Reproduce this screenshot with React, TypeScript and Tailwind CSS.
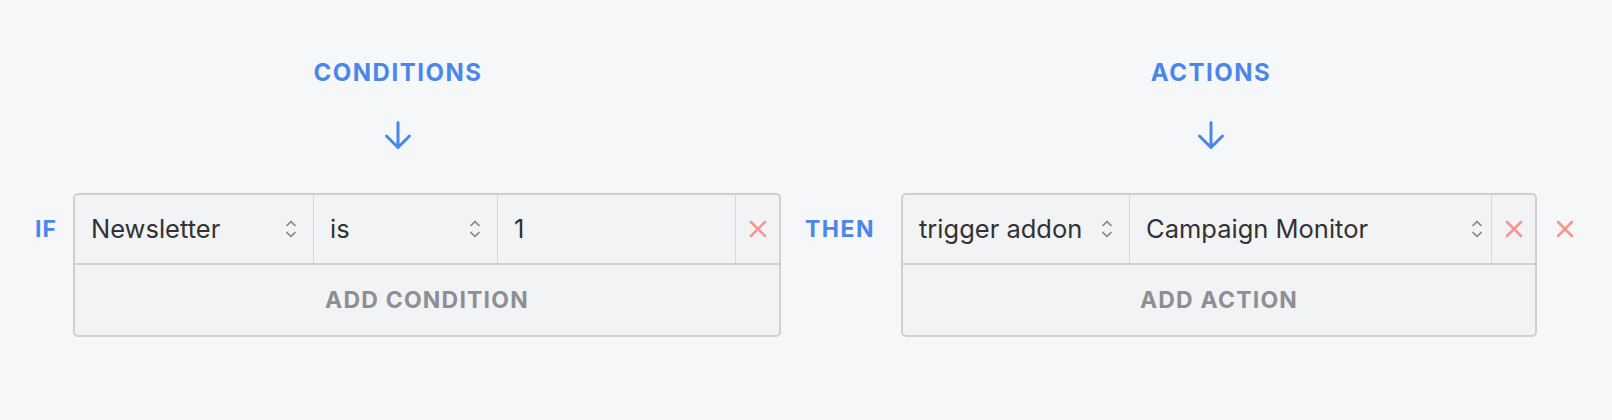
import React from 'react';

const blue = 'text-[#4b86ea]';

function ArrowDown() {
  return (
    <svg width="28" height="29" viewBox="0 0 28 29" fill="none" className="mx-auto">
      <path d="M14 1.5V26.5M2.5 15L14 26.5L25.5 15" stroke="#4b86ea" strokeWidth="3" strokeLinecap="round" strokeLinejoin="round" />
    </svg>
  );
}

function Chevrons() {
  return (
    <svg width="12" height="22" viewBox="0 0 12 22" fill="none" className="shrink-0">
      <path d="M2 7.5L6 3.5L10 7.5M2 14.5L6 18.5L10 14.5" stroke="#85858b" strokeWidth="1.7" strokeLinecap="round" strokeLinejoin="round" />
    </svg>
  );
}

function Cross() {
  return (
    <svg width="18" height="18" viewBox="0 0 18 18" fill="none" className="shrink-0">
      <path d="M2 2L16 16M16 2L2 16" stroke="#f4988e" strokeWidth="2.6" strokeLinecap="round" />
    </svg>
  );
}

function Select({ value, width, chevronPad = 'pr-4' }: { value: string; width: string; chevronPad?: string }) {
  return (
    <div className={`${width} flex items-center justify-between pl-[16px] ${chevronPad} border-r border-[#d3d8e0]`}>
      <span>{value}</span>
      <Chevrons />
    </div>
  );
}

function Header({ title, className }: { title: string; className: string }) {
  return (
    <div className={`${className} flex flex-col items-center`}>
      <div className={`text-[24px] font-bold tracking-[1.5px] leading-none ${blue}`}>{title}</div>
      <div className="mt-[36px]">
        <ArrowDown />
      </div>
    </div>
  );
}

export default function App() {
  return (
    <div className="w-[1612px] h-[420px] bg-[#f6f7f9] font-['Inter',sans-serif] text-[#323235]">
      <div className="flex pt-[61px]">
        <Header title="CONDITIONS" className="w-[796px]" />
        <Header title="ACTIONS" className="w-[780px] ml-[25px]" />
      </div>

      <div className="flex items-start pt-[43px] pl-[35px] text-[25.5px]">
        <div className={`w-[38px] h-[72px] flex items-center text-[23px] font-bold tracking-[1px] ${blue}`}>IF</div>
        <div className="w-[708px] rounded-[5px] border-2 border-[#cfd0d4] bg-[#f2f3f5]">
          <div className="flex h-[70px] border-b-2 border-[#cfd0d4]">
            <Select value="Newsletter" width="w-[239px]" />
            <Select value="is" width="w-[184px]" />
            <div className="w-[238px] flex items-center pl-[16px] border-r border-[#d3d8e0]">1</div>
            <div className="flex-1 flex items-center justify-center">
              <Cross />
            </div>
          </div>
          <div className="h-[70px] flex items-center justify-center text-[23px] font-bold tracking-[1.2px] text-[#8e8e93]">
            ADD CONDITION
          </div>
        </div>

        <div className={`ml-[24px] w-[96px] h-[72px] flex items-center text-[23px] font-bold tracking-[1.5px] ${blue}`}>THEN</div>
        <div className="w-[636px] rounded-[5px] border-2 border-[#cfd0d4] bg-[#f2f3f5]">
          <div className="flex h-[70px] border-b-2 border-[#cfd0d4]">
            <Select value="trigger addon" width="w-[227px]" />
            <Select value="Campaign Monitor" width="w-[362px]" chevronPad="pr-2" />
            <div className="flex-1 flex items-center justify-center">
              <Cross />
            </div>
          </div>
          <div className="h-[70px] flex items-center justify-center text-[23px] font-bold tracking-[1.2px] text-[#8e8e93]">
            ADD ACTION
          </div>
        </div>

        <div className="ml-[19px] h-[72px] flex items-center">
          <Cross />
        </div>
      </div>
    </div>
  );
}
